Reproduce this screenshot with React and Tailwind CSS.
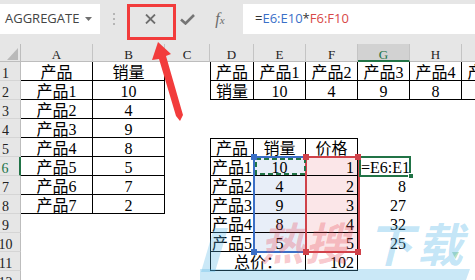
import React from "react";

const SERIF = "font-['Liberation_Serif','Noto_Sans_CJK_SC',serif]";
const COLS = "grid grid-cols-[21px_72px_72px_45px_44px_52px_52px_52px_52px_52px]";
const LETTERS = ["A", "B", "C", "D", "E", "F", "G", "H", "I"];

const DATA = {
  "1-1": "产品", "1-2": "销量",
  "2-1": "产品1", "2-2": "10",
  "3-1": "产品2", "3-2": "4",
  "4-1": "产品3", "4-2": "9",
  "5-1": "产品4", "5-2": "8",
  "6-1": "产品5", "6-2": "5",
  "7-1": "产品6", "7-2": "7",
  "8-1": "产品7", "8-2": "2",
  "1-4": "产品", "1-5": "产品1", "1-6": "产品2", "1-7": "产品3", "1-8": "产品4", "1-9": "产品5",
  "2-4": "销量", "2-5": "10", "2-6": "4", "2-7": "9", "2-8": "8", "2-9": "5",
  "5-4": "产品", "5-5": "销量", "5-6": "价格",
  "6-4": "产品1", "6-5": "10", "6-6": "1", "6-7": "=E6:E10*F6:F10",
  "7-4": "产品2", "7-5": "4", "7-6": "2", "7-7": "8",
  "8-4": "产品3", "8-5": "9", "8-6": "3", "8-7": "27",
  "9-4": "产品4", "9-5": "8", "9-6": "4", "9-7": "32",
  "10-4": "产品5", "10-5": "5", "10-6": "5", "10-7": "25",
  "11-4": "总价：", "11-6": "102",
};

function Toolbar() {
  return (
    <div className="flex h-[44px] bg-[#e6e6e6] pt-[4px]">
      <div className="w-[100px] h-[30px] bg-white flex items-center justify-between pl-[5px] pr-[8px]">
        <span className="font-['Open_Sans',sans-serif] text-[13px] text-[#444]">AGGREGATE</span>
        <svg width="7" height="4" viewBox="0 0 7 4">
          <polygon points="0,0 7,0 3.5,4" fill="#707070" />
        </svg>
      </div>
      <div className="w-[28px] h-[30px] flex flex-col items-center justify-center gap-[3px]">
        <span className="w-[2px] h-[2px] bg-[#b5b5b5]" />
        <span className="w-[2px] h-[2px] bg-[#b5b5b5]" />
        <span className="w-[2px] h-[2px] bg-[#b5b5b5]" />
      </div>
      <div className="w-[44px] h-[30px] flex items-center justify-center">
        <svg width="11" height="10" viewBox="0 0 11 10">
          <path d="M1 0.5 L10 9.5 M10 0.5 L1 9.5" stroke="#6e6e6e" strokeWidth="1.8" />
        </svg>
      </div>
      <div className="w-[30px] h-[30px] flex items-center justify-center">
        <svg width="15" height="11" viewBox="0 0 15 11">
          <path d="M1 5.5 L5.5 9.5 L14 1" fill="none" stroke="#757575" strokeWidth="2.6" />
        </svg>
      </div>
      <div className="w-[41px] h-[30px] flex items-center justify-center pr-[5px] font-['Liberation_Serif',serif] italic text-[#6b6b6b]">
        <span className="text-[16px]">f</span>
        <span className="text-[11px] mt-[3px]">x</span>
      </div>
      <div className="flex-1 h-[30px] bg-white flex items-center pl-[12px] font-['Open_Sans',sans-serif] text-[13px] whitespace-nowrap">
        <span className="text-[#333]">=</span>
        <span className="text-[#3a6fc8]">E6:E10</span>
        <span className="text-[#333]">*</span>
        <span className="text-[#d84848]">F6:F10</span>
      </div>
    </div>
  );
}

function HeaderRow() {
  return (
    <div className={`${COLS} h-[18px]`}>
      <div className="relative bg-[#e6e6e6] border-r border-r-[#bdbdbd] border-b border-b-[#bdbdbd]">
        <svg className="absolute left-[7px] top-[4px]" width="11" height="12" viewBox="0 0 11 12">
          <polygon points="11,0 11,12 0,12" fill="#b9b9b9" />
        </svg>
      </div>
      {LETTERS.map((l) =>
        l === "G" ? (
          <div
            key={l}
            className={`bg-[#d2d2d2] border-r border-r-[#c4c4c4] border-b-2 border-b-[#217346] flex items-end justify-center leading-[10px] text-[13px] text-[#217346] ${SERIF}`}
          >
            {l}
          </div>
        ) : (
          <div
            key={l}
            className={`bg-[#e6e6e6] border-r border-r-[#c4c4c4] border-b border-b-[#bdbdbd] flex items-end justify-center leading-[12px] text-[13px] text-[#222] ${SERIF}`}
          >
            {l}
          </div>
        )
      )}
    </div>
  );
}

function cellClass(r, c, merged) {
  const k = [`flex items-end leading-[14px] text-[16px] text-black border-b border-r whitespace-nowrap ${SERIF}`];
  const t1 = (c === 1 || c === 2) && r <= 8;
  const t2 = c >= 4 && r <= 2;
  const t3 = c >= 4 && c <= 6 && r >= 5 && r <= 11;
  const inTable = t1 || t2 || t3;
  k.push(inTable ? "border-b-black border-r-black" : "border-b-transparent border-r-transparent");
  if ((t2 || t3) && c === 4) k.push("border-l border-l-black");
  if (t3 && r === 5) k.push("border-t border-t-black");
  if (merged) k.push("col-span-2");
  if (c === 5 && r >= 6 && r <= 10) k.push("bg-[#e8eef8]");
  if (c === 6 && r >= 6 && r <= 10) k.push("bg-[#fbe6e8]");
  const right = (c === 6 && r >= 6 && r <= 11) || (c === 7 && r >= 7 && r <= 10);
  if (right) k.push("justify-end pr-[3px]");
  else if (c === 7 && r === 6) k.push("justify-start pl-[3px] overflow-hidden bg-white");
  else k.push("justify-center");
  return k.join(" ");
}

function Row({ r }) {
  const cells = [];
  cells.push(
    <div
      key="h"
      className={`bg-[#e6e6e6] border-b border-b-[#d5d5d5] flex items-end justify-center leading-[12px] text-[14px] pr-[9px] ${SERIF} ${
        r === 6 ? "border-r-2 border-r-[#217346] text-[#217346] bg-[#dcdcdc]" : "border-r border-r-[#bdbdbd] text-[#222]"
      }`}
    >
      {r}
    </div>
  );
  for (let c = 1; c <= 9; c++) {
    if (r === 11 && c === 5) continue;
    const merged = r === 11 && c === 4;
    cells.push(
      <div key={c} className={cellClass(r, c, merged)}>
        {DATA[`${r}-${c}`] ?? ""}
      </div>
    );
  }
  return <>{cells}</>;
}

export default function App() {
  const rows = Array.from({ length: 12 }, (_, i) => i + 1);
  return (
    <div className="relative w-[475px] h-[280px] overflow-hidden bg-white">
      <Toolbar />
      <HeaderRow />
      <div className={`${COLS} auto-rows-[19px]`}>
        {rows.map((r) => (
          <Row key={r} r={r} />
        ))}
      </div>

      {/* reference ranges */}
      <div className="absolute left-[253px] top-[156px] w-[54px] h-[97px] border-2 border-[#3b6fc6]" />
      <div className="absolute left-[305px] top-[156px] w-[55px] h-[97px] border-2 border-[#cf424a]" />
      <svg className="absolute left-[255px] top-[158px]" width="51" height="17" viewBox="0 0 51 17">
        <rect x="1" y="1" width="49" height="15" fill="none" stroke="#217346" strokeWidth="2" strokeDasharray="5 3" />
      </svg>
      <div className="absolute left-[359px] top-[156px] w-[52px] h-[21px] border-2 border-[#217346]" />
      <div className="absolute left-[408px] top-[173px] w-[6px] h-[6px] bg-[#217346] border border-white" />

      <div className="absolute left-[251px] top-[154px] w-[6px] h-[6px] bg-[#3b6fc6]" />
      <div className="absolute left-[251px] top-[249px] w-[6px] h-[6px] bg-[#3b6fc6]" />
      <div className="absolute left-[303px] top-[154px] w-[6px] h-[6px] bg-[#cf424a]" />
      <div className="absolute left-[303px] top-[249px] w-[6px] h-[6px] bg-[#cf424a]" />
      <div className="absolute left-[355px] top-[154px] w-[6px] h-[6px] bg-[#cf424a]" />
      <div className="absolute left-[355px] top-[249px] w-[6px] h-[6px] bg-[#cf424a]" />

      {/* watermark */}
      <svg className="absolute left-0 top-0 pointer-events-none" width="475" height="280" viewBox="0 0 475 280">
        <polygon points="214,228 228,228 215,272 201,272" fill="rgba(80,180,230,0.3)" />
        <polygon points="200,269 470,269 466,280 200,280" fill="rgba(80,180,230,0.3)" />
        <polygon points="452,252 459,252 455.5,259" fill="rgba(60,170,90,0.35)" />
      </svg>
      <div className="absolute left-[260px] top-[219px] pointer-events-none text-[44px] leading-none font-bold italic tracking-[1px] font-['Noto_Sans_CJK_SC',sans-serif] text-[rgba(232,70,85,0.3)]">
        热搜
      </div>
      <div className="absolute left-[367px] top-[219px] pointer-events-none text-[46px] leading-none font-bold italic tracking-[4px] font-['Noto_Sans_CJK_SC',sans-serif] text-[rgba(70,175,230,0.32)]">
        下载
      </div>

      {/* highlight box and arrow */}
      <div className="absolute left-[127px] top-[4px] w-[49px] h-[36px] border-[3px] border-[#f23c3c]" />
      <svg className="absolute left-0 top-0 pointer-events-none" width="475" height="280" viewBox="0 0 475 280">
        <polygon points="158,42 171,54 166,56 183,115 180,121 176,116 159,59 152,60" fill="#f23c3c" />
      </svg>
    </div>
  );
}
